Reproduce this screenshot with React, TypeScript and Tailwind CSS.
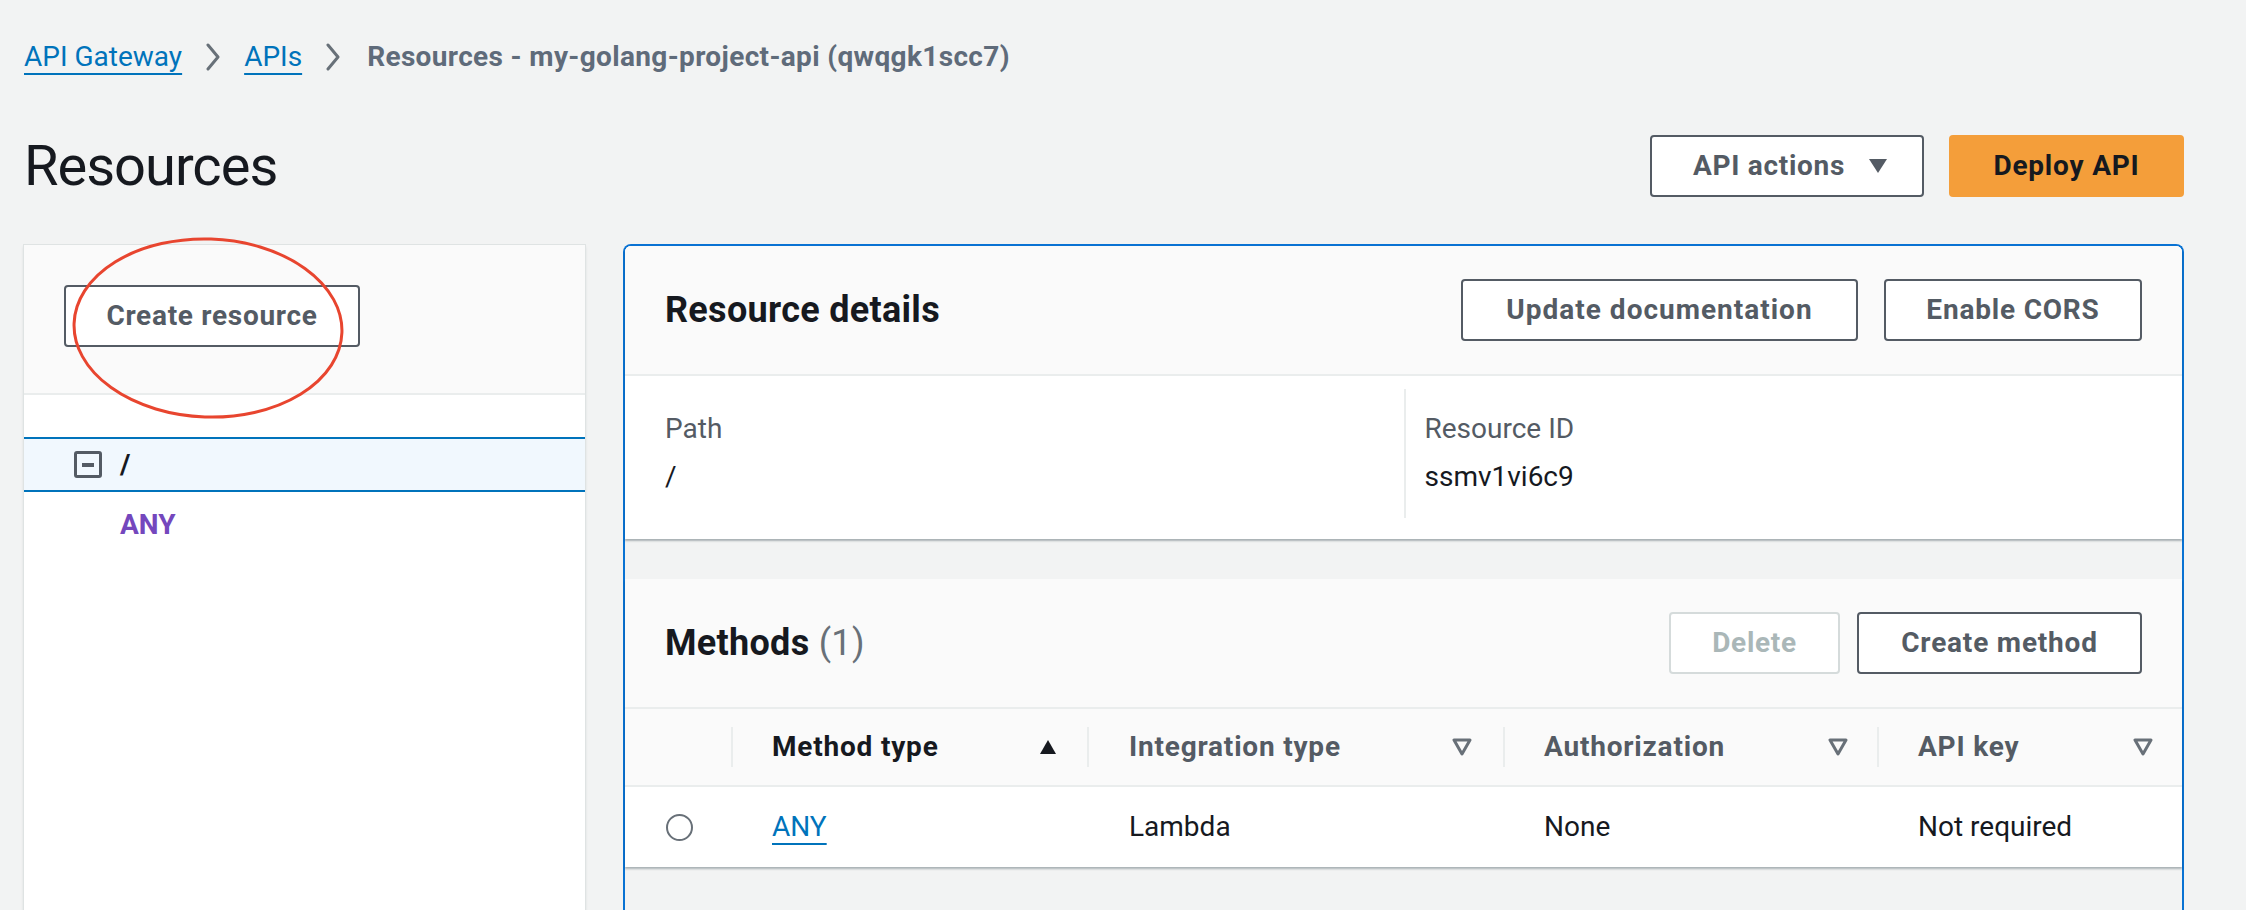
import React from "react";

const Chevron = () => (
  <svg width="18" height="28" viewBox="0 0 18 28" className="shrink-0">
    <path d="M4 2 L14 14 L4 26" fill="none" stroke="#687078" strokeWidth="3" strokeLinecap="round" strokeLinejoin="round" />
  </svg>
);

const CaretDown = ({ color = "#545b64" }: { color?: string }) => (
  <svg width="20" height="16" viewBox="0 0 20 16" className="shrink-0">
    <path d="M1 1 H19 L10 15 Z" fill={color} />
  </svg>
);

const SortUp = () => (
  <svg width="18" height="16" viewBox="0 0 18 16" className="shrink-0">
    <path d="M9 1 L17 15 H1 Z" fill="#16191f" />
  </svg>
);

const SortDown = () => (
  <svg width="20" height="18" viewBox="0 0 20 18" className="shrink-0">
    <path d="M2 2 H18 L10 16 Z" fill="none" stroke="#687078" strokeWidth="3" strokeLinejoin="round" />
  </svg>
);

export default function App() {
  return (
    <div
      className="relative w-[2246px] h-[910px] overflow-hidden bg-[#f2f3f3] text-[#16191f]"
      style={{ fontFamily: "Roboto, 'Liberation Sans', sans-serif" }}
    >
      <div className="pl-[24px] pr-[62px] pt-[37px]">
        {/* Breadcrumb */}
        <div className="flex items-center h-[40px] text-[28px]">
          <span className="text-[#0073bb] underline decoration-2 underline-offset-[7px]">API Gateway</span>
          <span className="ml-[22px]"><Chevron /></span>
          <span className="ml-[22px] text-[#0073bb] underline decoration-2 underline-offset-[7px]">APIs</span>
          <span className="ml-[22px]"><Chevron /></span>
          <span className="ml-[25px] text-[#5f6b7a] font-bold tracking-[0.35px]">
            Resources - my-golang-project-api (qwqgk1scc7)
          </span>
        </div>

        {/* Header */}
        <div className="mt-[58px] flex items-center justify-between h-[62px]">
          <h1 className="text-[56px] leading-[64px] font-normal tracking-[-1px] text-[#16191f]">Resources</h1>
          <div className="flex items-center gap-[25px]">
            <div className="w-[274px] h-[62px] pl-[41px] flex items-center gap-[23px] border-2 border-[#545b64] rounded-[4px] bg-white text-[28px] font-bold tracking-[0.7px] text-[#545b64]">
              API actions
              <CaretDown />
            </div>
            <div className="w-[235px] h-[62px] flex items-center justify-center rounded-[4px] bg-[#f49e3a] text-[28px] font-bold tracking-[0.8px] text-[#16191f]">
              Deploy API
            </div>
          </div>
        </div>

        {/* Panels */}
        <div className="mt-[48px] flex gap-[38px] items-start">
          {/* Left navigation panel */}
          <div className="w-[561px] h-[700px] bg-white shadow-[0_0_0_1px_#dfe3e3,0_2px_3px_rgba(0,28,36,0.2)]">
            <div className="h-[150px] bg-[#fafafa] pt-[40px] pl-[40px] border-b-2 border-[#eaeded]">
              <div className="w-[296px] h-[62px] flex items-center justify-center border-2 border-[#545b64] rounded-[4px] bg-white text-[28px] font-bold tracking-[0.7px] text-[#545b64]">
                Create resource
              </div>
            </div>
            <div className="mt-[42px] h-[55px] border-y-2 border-[#0073bb] bg-[#f1f8fe] flex items-center pl-[50px] gap-[18px]">
              <div className="w-[28px] h-[27px] border-[3px] border-[#545b64] rounded-[3px] flex items-center justify-center">
                <div className="w-[12px] h-[4px] bg-[#545b64]" />
              </div>
              <span className="text-[28px] font-bold text-[#16191f]">/</span>
            </div>
            <div className="h-[66px] flex items-center pl-[96px] text-[28px] font-bold text-[#7447bd]">ANY</div>
          </div>

          {/* Right content */}
          <div className="flex-1 -mt-[1px] h-[700px] border-2 border-b-0 border-[#0972d3] rounded-t-[8px]">
            {/* Resource details card */}
            <div className="bg-white shadow-[0_2px_2px_rgba(0,28,36,0.3)] rounded-t-[6px]">
              <div className="h-[130px] bg-[#fafafa] rounded-t-[6px] px-[40px] flex items-center justify-between border-b-2 border-[#eaeded]">
                <h2 className="text-[36px] font-bold tracking-[0.3px] text-[#16191f]">Resource details</h2>
                <div className="flex items-center gap-[26px]">
                  <div className="w-[397px] h-[62px] flex items-center justify-center border-2 border-[#545b64] rounded-[4px] bg-white text-[28px] font-bold tracking-[1px] text-[#545b64]">
                    Update documentation
                  </div>
                  <div className="w-[258px] h-[62px] flex items-center justify-center border-2 border-[#545b64] rounded-[4px] bg-white text-[28px] font-bold tracking-[0.8px] text-[#545b64]">
                    Enable CORS
                  </div>
                </div>
              </div>
              <div className="px-[40px] pt-[13px] pb-[21px] grid grid-cols-2">
                <div className="pt-[20px] h-[129px]">
                  <div className="text-[28px] leading-[40px] text-[#545b64]">Path</div>
                  <div className="mt-[8px] text-[28px] leading-[40px] text-[#16191f]">/</div>
                </div>
                <div className="pt-[20px] h-[129px] border-l-2 border-[#eaeded] pl-[19px]">
                  <div className="text-[28px] leading-[40px] text-[#545b64]">Resource ID</div>
                  <div className="mt-[8px] text-[28px] leading-[40px] text-[#16191f]">ssmv1vi6c9</div>
                </div>
              </div>
            </div>

            {/* Methods card */}
            <div className="mt-[40px] bg-white shadow-[0_2px_2px_rgba(0,28,36,0.3)]">
              <div className="h-[130px] bg-[#fafafa] px-[40px] flex items-center justify-between border-b-2 border-[#eaeded]">
                <h2 className="text-[36px] font-bold tracking-[0.3px] text-[#16191f]">
                  Methods <span className="font-normal text-[#687078]">(1)</span>
                </h2>
                <div className="flex items-center gap-[17px]">
                  <div className="w-[171px] h-[62px] flex items-center justify-center border-2 border-[#d5dbdb] rounded-[4px] bg-white text-[28px] font-bold tracking-[0.7px] text-[#aab7b8]">
                    Delete
                  </div>
                  <div className="w-[285px] h-[62px] flex items-center justify-center border-2 border-[#545b64] rounded-[4px] bg-white text-[28px] font-bold tracking-[0.8px] text-[#545b64]">
                    Create method
                  </div>
                </div>
              </div>
              <div className="grid grid-cols-[106px_356px_416px_374px_1fr] h-[78px] bg-[#fafafa] border-b-2 border-[#eaeded] items-center text-[28px] font-bold tracking-[0.8px]">
                <div />
                <div className="h-[40px] border-l-2 border-[#eaeded] flex items-center justify-between pl-[39px] pr-[30px] text-[#16191f]">
                  Method type
                  <SortUp />
                </div>
                <div className="h-[40px] border-l-2 border-[#eaeded] flex items-center justify-between pl-[40px] pr-[31px] text-[#545b64]">
                  Integration type
                  <SortDown />
                </div>
                <div className="h-[40px] border-l-2 border-[#eaeded] flex items-center justify-between pl-[39px] pr-[29px] text-[#545b64]">
                  Authorization
                  <SortDown />
                </div>
                <div className="h-[40px] border-l-2 border-[#eaeded] flex items-center justify-between pl-[39px] pr-[29px] text-[#545b64]">
                  API key
                  <SortDown />
                </div>
              </div>
              <div className="grid grid-cols-[106px_356px_416px_374px_1fr] h-[80px] items-center text-[28px]">
                <div className="flex justify-center pl-[2px]">
                  <div className="w-[27px] h-[27px] rounded-full border-2 border-[#687078] bg-white" />
                </div>
                <div className="pl-[41px]">
                  <span className="text-[#0073bb] underline decoration-2 underline-offset-[7px]">ANY</span>
                </div>
                <div className="pl-[42px] text-[#16191f]">Lambda</div>
                <div className="pl-[41px] text-[#16191f]">None</div>
                <div className="pl-[41px] text-[#16191f]">Not required</div>
              </div>
            </div>
          </div>
        </div>
      </div>

      {/* Red annotation ellipse */}
      <svg className="absolute left-[70px] top-[236px] pointer-events-none" width="276" height="184" viewBox="0 0 276 184">
        <ellipse cx="138" cy="92" rx="134" ry="89" fill="none" stroke="#e8452f" strokeWidth="3" transform="rotate(2 138 92)" />
      </svg>
    </div>
  );
}
